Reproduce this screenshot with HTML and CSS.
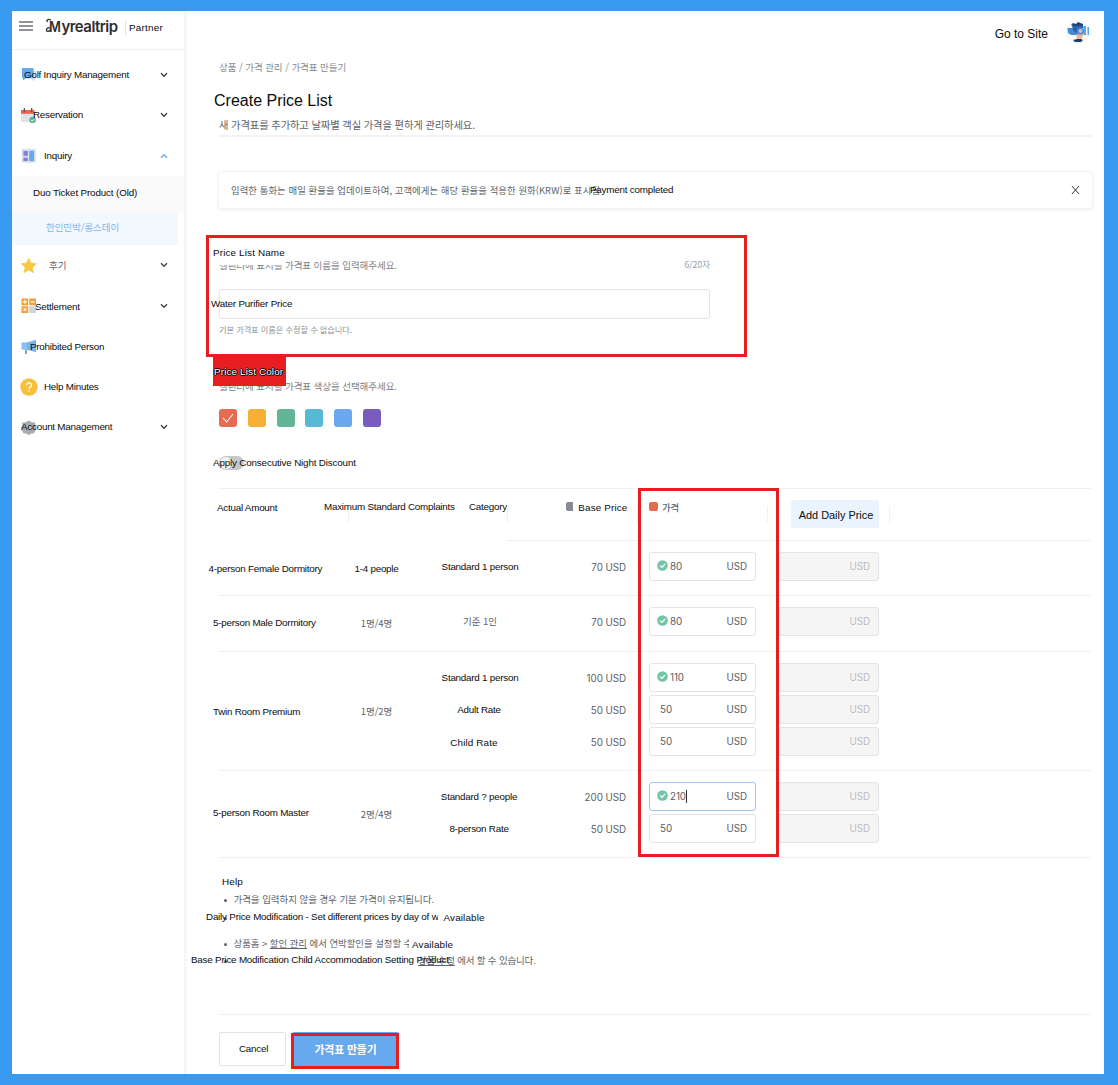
FILE: index.html
```html
<!DOCTYPE html>
<html lang="ko">
<head>
<meta charset="utf-8">
<title>Create Price List</title>
<link rel="stylesheet" href="styles.css">
</head>
<body>
<svg width="0" height="0" class="defs">
  <symbol id="down" viewBox="0 0 8 6"><path d="M1 1.2 4 4.2 7 1.2" fill="none" stroke="currentColor" stroke-width="1.5"/></symbol>
  <symbol id="ok" viewBox="0 0 11 11"><circle cx="5.5" cy="5.5" r="5.3" fill="#74c4a7"/><path d="M3 5.6 4.9 7.4 8.2 3.9" fill="none" stroke="#fff" stroke-width="1.3"/></symbol>
</svg>
<div class="app">
  <aside class="side">
    <header class="brand">
      <svg class="burger" viewBox="0 0 14 10"><path d="M0 1h14M0 5h14M0 9h14" stroke="#6b7078" stroke-width="1.6"/></svg>
      <span class="logo"><svg class="swash" viewBox="0 0 8 16"><path d="M6 2C3 .5 1 2 2.500 4M5 10c-2-1-4 1-3.500 2.500s3.500 1 4-1" fill="none" stroke="#2d2d30" stroke-width="1.300"/></svg><i>M</i>yrealtrip</span>
      <span class="partner wide">Partner</span>
    </header>
    <nav class="nav">
      <a class="item"><svg class="ic" viewBox="0 0 16 16"><path d="M4 4h11v8h-1v3l-4-3H4z" fill="#c5e0fb"/><path d="M1 1h12v10H6l-4 3v-3H1z" fill="#64a8ef"/></svg><span class="m3">Golf Inquiry Management</span><svg class="chev"><use href="#down"/></svg></a>
      <a class="item"><svg class="ic" viewBox="0 0 16 16"><path d="M0 5h14v9.500H0z" fill="#dfe3e7"/><path d="M0 2h14v4H0z" fill="#e8644e"/><path d="M3.500 0v4M11 0v4" stroke="#555b66" stroke-width="1.4"/><circle cx="12" cy="12.5" r="3.4" fill="#5fb491"/><path d="m10.5 12.5 1.2 1.1 2-2.1" fill="none" stroke="#fff"/></svg><span class="m12">Reservation</span><svg class="chev"><use href="#down"/></svg></a>
      <a class="item"><svg class="ic" viewBox="0 0 16 16"><path d="M.8.8h14.400v14.400H.8z" fill="#dadfe6"/><path d="M2.500 3h4.500v5H2.500zM2.500 10h4.500v3.500H2.500z" fill="#8579e6"/><path d="M8.500 3h5v10.500h-5z" fill="#66a9ef"/></svg><span class="m23">Inquiry</span><svg class="chev up"><use href="#down"/></svg></a>
      <a class="sub">Duo Ticket Product (Old)</a>
      <a class="sub on kr">한인민박/롱스테이</a>
      <a class="item"><svg class="ic" viewBox="0 0 16 16"><path d="m8 .3 2.300 5 5.500.6-4.100 3.700 1.200 5.500L8 12.300l-4.900 2.800 1.200-5.500L.2 5.900l5.500-.6z" fill="#f6c844" stroke="#f6c844" stroke-width=".8" stroke-linejoin="round"/></svg><span class="kr m28">후기</span><svg class="chev"><use href="#down"/></svg></a>
      <a class="item"><svg class="ic" viewBox="0 0 16 16"><path d="M.5.5h7v7h-7zM8.500.5h7v7h-7zM.5 8.500h7v7h-7z" fill="#f0a23c"/><path d="M8.500 8.500h7v7h-7z" fill="#cdd3d9"/><path d="M2 4h4M4 2v4M10 4h4M2.700 10.700l2.600 2.600m0-2.600-2.600 2.600" stroke="#fff" stroke-width="1.200"/></svg><span class="m14 low">Settlement</span><svg class="chev"><use href="#down"/></svg></a>
      <a class="item"><svg class="ic" viewBox="0 0 16 16"><path d="M4 9h2.200v6.500H4z" fill="#9aa2ab"/><path d="M.5 3.500h6V11h-6z" fill="#8cc0f5"/><path d="m6 3.500 9.500-2.700v13L6 11z" fill="#76b3f2"/></svg><span class="m9 low">Prohibited Person</span></a>
      <a class="item"><svg class="ic big" viewBox="0 0 18 18"><circle cx="9" cy="9" r="8.700" fill="#f5c13c"/><path d="M6.600 7.200c0-3.200 4.900-3.200 4.900 0 0 1.800-2.400 1.800-2.400 3.800M9.100 12.300v1.500" fill="none" stroke="#fff" stroke-width="1.300"/></svg><span class="m23">Help Minutes</span></a>
      <a class="item"><svg class="ic" viewBox="0 0 16 16"><path d="m8 .5 3 1.700 3.500.3.300 3.500L16 8l-1.200 3-1.300 2.700-3 .3L8 15.700 5.500 14l-3-.3L1.200 11 0 8l1.200-2 .3-3.500L5 2.200z" fill="#a3abb3"/><circle cx="8" cy="8" r="2.500" fill="#b9c0c7"/></svg><span class="m0">Account Management</span><svg class="chev"><use href="#down"/></svg></a>
    </nav>
  </aside>
  <main class="main">
    <header class="top">
      <span>Go to Site</span>
      <svg class="avatar" viewBox="0 0 24 24"><circle cx="12" cy="12" r="11.300" fill="#fbfcfe" stroke="#e8ebee" stroke-width=".7"/><path d="M7 6 5 5l2-2 3 1 2-2 5 2v4H7z" fill="#1d4775"/><path d="M9 9h9v6l-3 4h-4z" fill="#efb59c"/><path d="M1.500 8h7l3-1 1 7-3 1H5l-3-2z" fill="#428bdc"/><path d="M6 6h11l1 2-6 1-2 4-3-3z" fill="#2a64a8"/><circle cx="14.500" cy="11" r="2.700" fill="#efb59c" stroke="#428bdc" stroke-width="1.600"/><path d="M18 6h2v9h-2zM21.500 7h1.500v8h-1.500z" fill="#55a2ed"/><path d="m7 20 4-1h4l2 1-2 2H9z" fill="#173f70"/></svg>
    </header>
    <div class="crumb kr">상품 / 가격 관리 / 가격표 만들기</div>
    <h1>Create Price List</h1>
    <p class="lead kr">새 가격표를 추가하고 날짜별 객실 가격을 편하게 관리하세요.</p>
    <div class="notice"><span class="kr">입력한 통화는 매일 환율을 업데이트하여, 고객에게는 해당 환율을 적용한 원화(KRW)로 표시됨</span><span class="paid">Payment completed</span><svg class="x" viewBox="0 0 10 10"><path d="m1 .5 8 9M9 .5 1 9.500" stroke="#333" stroke-width="1.100"/></svg></div>
    <section class="field">
      <h2 class="wide name-title">Price List Name</h2>
      <div class="desc kr"><span>캘린더에 표시될 가격표 이름을 입력해주세요.</span><small>6/20자</small></div>
      <div class="text-input"><span>Water Purifier Price</span></div>
      <p class="hint kr">기본 가격표 이름은 수정할 수 없습니다.</p>
    </section>
    <section class="field">
      <h2 class="wide color-title">Price List Color</h2>
      <div class="desc kr"><span>캘린더에 표시될 가격표 색상을 선택해주세요.</span></div>
      <div class="swatches"><b class="red"><svg viewBox="0 0 18 18"><path d="m4 9 3.700 4L14 5" fill="none" stroke="#fff" stroke-width="1.100"/></svg></b><b class="yellow"></b><b class="green"></b><b class="cyan"></b><b class="blue"></b><b class="purple"></b></div>
    </section>
    <div class="discount"><i class="toggle"></i><span>Apply Consecutive Night Discount</span></div>
    <section class="table">
      <div class="row head">
        <div class="c-name"><span>Actual Amount</span></div>
        <div class="c-occ div"><span>Maximum Standard Complaints</span></div>
        <div class="c-cat div"><span>Category</span></div>
        <div class="c-base div"><i></i><span class="wide">Base Price</span></div>
        <div class="c-price div"><i></i><span class="kr">가격</span></div>
        <div class="c-add div"><button>Add Daily Price</button></div>
        <div class="div"></div>
      </div>
      <div class="row r1">
        <div class="c-name far"><span>4-person Female Dormitory</span></div>
        <div class="c-occ down1"><span>1-4 people</span></div>
        <div class="c-cat"><p>Standard 1 person</p></div>
        <div class="c-base"><p>70 USD</p></div>
        <div class="c-price"><p><svg><use href="#ok"/></svg><span>80</span><em>USD</em></p></div>
        <div class="c-add"><p>USD</p></div>
      </div>
      <div class="row r2">
        <div class="c-name up1"><span>5-person Male Dormitory</span></div>
        <div class="c-occ kr"><span>1명/4명</span></div>
        <div class="c-cat kr"><p>기준 1인</p></div>
        <div class="c-base"><p>70 USD</p></div>
        <div class="c-price"><p><svg><use href="#ok"/></svg><span>80</span><em>USD</em></p></div>
        <div class="c-add"><p>USD</p></div>
      </div>
      <div class="row r3">
        <div class="c-name down1"><span>Twin Room Premium</span></div>
        <div class="c-occ kr"><span>1명/2명</span></div>
        <div class="c-cat"><p>Standard 1 person</p><p class="left">Adult Rate</p><p class="shift wide">Child Rate</p></div>
        <div class="c-base"><p>100 USD</p><p>50 USD</p><p>50 USD</p></div>
        <div class="c-price"><p><svg><use href="#ok"/></svg><span>110</span><em>USD</em></p><p><span>50</span><em>USD</em></p><p><span>50</span><em>USD</em></p></div>
        <div class="c-add"><p>USD</p><p>USD</p><p>USD</p></div>
      </div>
      <div class="row r4">
        <div class="c-name up1"><span>5-person Room Master</span></div>
        <div class="c-occ kr"><span>2명/4명</span></div>
        <div class="c-cat"><p class="left">Standard ? people</p><p class="left">8-person Rate</p></div>
        <div class="c-base"><p>200 USD</p><p>50 USD</p></div>
        <div class="c-price"><p class="focus"><svg><use href="#ok"/></svg><span class="caret">210</span><em>USD</em></p><p><span>50</span><em>USD</em></p></div>
        <div class="c-add"><p>USD</p><p>USD</p></div>
      </div>
    </section>
    <section class="help">
      <h3 class="wide">Help</h3>
      <div class="line kr"><i></i><span>가격을 입력하지 않을 경우 기본 가격이 유지됩니다.</span></div>
      <div class="line daily"><i></i><span class="over clip">Daily Price Modification - Set different prices by day of w</span><span class="avail wide">Available</span></div>
      <div class="line kr third"><i></i><span class="cut">상품홈 &gt; <u>할인 관리</u> 에서 연박할인을 설정할 수</span><span class="avail wide">Available</span></div>
      <div class="line kr fourth"><i></i><span class="over base-mod">Base Price Modification Child Accommodation Setting Product</span><span class="tail"><u>상품 수정</u> 에서 할 수 있습니다.</span></div>
    </section>
    <footer class="actions"><button class="cancel">Cancel</button><button class="create kr">가격표 만들기</button></footer>
    <div class="mark mark-name"></div>
    <div class="mark mark-price"></div>
    <div class="mark mark-create"></div>
  </main>
</div>
</body>
</html>
```

FILE: styles.css
```css
* { box-sizing: border-box; }
body, h1, h2, h3, p { margin: 0; font-weight: 400; }
body { background: #389bf1; padding: 11px 14px 11px 12px; height: 1085px; overflow: hidden; font: 9.8px/14px "Liberation Sans", "Noto Sans CJK KR", sans-serif; letter-spacing: -.22px; color: #0c0c0c; }
i, em { font-style: normal; }
button { font: inherit; letter-spacing: inherit; color: inherit; border: 0; padding: 0; }
.defs { position: absolute; }
.kr { font-family: "Noto Sans CJK KR", sans-serif; font-size: 9.5px; letter-spacing: -.06px; color: #5c6268; }
.wide { font-size: 9.9px; letter-spacing: .14px; color: #0c0c0c; font-family: "Liberation Sans", sans-serif; }
.app { display: flex; height: 1063px; background: #fff; white-space: nowrap; }

.side { width: 173px; flex: none; border-right: 1px solid #f4f4f5; box-shadow: 1px 0 3px rgba(0,0,0,.05); }
.brand { height: 39px; display: flex; align-items: center; padding: 0 0 7px 7px; border-bottom: 1px solid #f0f0f1; }
.burger { width: 14px; height: 10px; margin-top: -1px; }
.logo { display: flex; margin-left: 12px; width: 74px; font: 600 15px/20px Inter, sans-serif; letter-spacing: -.55px; color: #2d2d30; }
.swash { width: 8px; height: 16px; margin: 1px -4px 0 0; flex: none; }
.logo i { display: block; width: 12.5px; font-weight: 600; transform: scaleX(.86); transform-origin: left; letter-spacing: 0; }
.partner { margin: 2px 0 0 6px; padding-left: 3px; border-left: 1px solid #e3e3e4; letter-spacing: .24px; }
.nav { padding-top: 4.5px; display: flex; flex-direction: column; }
.item { height: 40.5px; display: flex; align-items: center; padding: 0 16px 0 9px; }
.item span { position: relative; margin-right: auto; }
.item .low { margin-top: 2px; }
.ic { width: 15.5px; height: 15.5px; margin-right: -15.5px; flex: none; }
.ic.big { width: 18px; height: 18px; margin: 0 -17px 0 -1px; }
.m0 { margin-left: 0; } .m3 { margin-left: 3px; } .m9 { margin-left: 9px; } .m12 { margin-left: 12px; }
.m14 { margin-left: 14px; } .m23 { margin-left: 23px; } .m28 { margin-left: 28px; }
.chev { width: 8px; height: 6px; color: #43474d; flex: none; }
.chev.up { color: #71acec; transform: rotate(180deg); }
.sub { height: 34.5px; padding: 9.5px 0 0 21px; background: #fafafa; letter-spacing: -.13px; }
.sub.on { background: #f1f9ff; margin-right: 6px; padding-left: 34px; color: #82b4ed; letter-spacing: -.06px; }

.main { position: relative; flex: 1; padding-left: 34px; }
.top { height: 44px; display: flex; justify-content: flex-end; align-items: center; padding-right: 14px; gap: 18px; font-size: 12px; letter-spacing: 0; padding-top: 1px; }
.avatar { width: 24px; height: 24px; margin-top: -3px; }
.crumb { height: 24px; line-height: 24px; font-size: 9.5px; color: #878c91; }
h1 { font-size: 16px; letter-spacing: 0; line-height: 22px; margin: 11px 0 0 -5px; }
.lead { font-size: 10.3px; letter-spacing: -.12px; line-height: 20px; margin-top: 3px; width: 873px; border-bottom: 2px solid #f3f3f4; height: 22px; }
.notice { margin-top: 34px; width: 875px; height: 38px; margin-left: -1px; border: 1px solid #f3f3f4; border-radius: 3px; box-shadow: 0 1px 3px rgba(0,0,0,.08); display: flex; align-items: center; padding: 0 12px 0 12px; }
.notice .kr { font-size: 9.4px; letter-spacing: .06px; width: 359px; }
.notice .paid { position: relative; letter-spacing: -.2px; }
.notice .x { width: 9px; height: 10px; margin-left: auto; }

.name-title { position: relative; width: 73px; height: 21px; margin: 35px 0 0 -6px; line-height: 17px; background: #fff; }
.desc { display: flex; justify-content: space-between; width: 491px; height: 16px; margin-top: -7px; line-height: 14px; color: #7c8187; }
.desc small { font-size: 8.7px; color: #999da1; }
.text-input { margin-top: 15px; width: 491px; height: 30px; border: 1px solid #e4e4e6; border-radius: 3px; line-height: 28px; }
.text-input span { margin-left: -9px; letter-spacing: -.17px; }
.hint { font-size: 8.2px; line-height: 16px; margin-top: 2px; color: #8b9095; }
.color-title { position: relative; width: 73px; height: 30px; margin: 19px 0 0 -6px; background: #e61e20; color: #fff; line-height: 31px; padding-left: 1px; text-shadow: 1px 0 #000, -1px 0 #000, 0 1px #000, 0 -1px #000; }
.swatches { display: flex; gap: 10.8px; margin-top: 14px; }
.swatches b { width: 18px; height: 18px; border-radius: 3px; }
.swatches svg { display: block; }
.red { background: #e86a50; } .yellow { background: #f5b035; } .green { background: #62b595; }
.cyan { background: #58b9d3; } .blue { background: #6aa9ee; } .purple { background: #795cbd; }
.discount { display: flex; height: 14px; margin-top: 29px; line-height: 14px; }
.toggle { width: 25px; height: 14px; border-radius: 7px; background: #c6c7c8; margin-right: -31px; padding: 1px; }
.toggle::before { content: ""; display: block; width: 12px; height: 12px; border-radius: 50%; background: #f2f2f2; }
.discount span { position: relative; letter-spacing: -.15px; }

.table { width: 873px; margin-top: 18px; border-top: 1px solid #f1f1f2; }
.row { display: grid; grid-template-columns: 130px 87px 72px 130px 130px 122px 1fr; border-bottom: 1px solid #f1f1f2; }
.row p { height: 29px; line-height: 29px; }
.row > div { display: flex; flex-direction: column; gap: 3px; padding-top: 11px; }
.row > .c-name, .row > .c-occ { justify-content: center; padding-top: 0; }
.c-name span { margin-left: -6px; }
.c-name.far span { margin-left: -10.5px; }
.row > .c-name.up1 { padding-bottom: 2px; }
.row > .down1, .row > .c-name.far { padding-top: 1px; }
.c-occ, .c-cat { align-items: center; }
.row:not(.head) > .c-occ { padding-right: 32px; }
.row:not(.head) > .c-occ.kr { padding-bottom: 1px; }
.row:not(.head) > .c-cat { padding-left: 16px; }
.c-cat .shift { margin: 1px 12px 0 0; }
.c-cat .left { margin-right: 2px; }
.c-base, .c-price, .c-add { font-family: Inter, sans-serif; font-size: 9.8px; letter-spacing: -.05px; color: #5c6066; }
.c-base { text-align: right; padding-right: 12px; }
.c-base p { padding-top: 1px; }
.r1 { height: 55px; } .r2 { height: 56px; } .r3 { height: 119px; } .r4 { height: 87px; }
.c-price p { width: 107px; border: 1px solid #e4e4e6; border-radius: 3px; display: flex; line-height: 27px; padding: 0 8px 0 10px; }
.c-price svg { width: 11px; height: 11px; margin: 7px 2px 0 -3px; }
.c-price em { margin-left: auto; }
.c-price .focus { border-color: #9fc6f4; }
.c-price .caret { height: 13px; line-height: 13px; margin-top: 7px; border-right: 1px solid #333; }
.c-add p { width: 101px; border: 1px solid #e4e4e6; border-radius: 3px; background: #f5f5f5; color: #b9bcc0; text-align: right; padding-right: 8px; line-height: 27px; }
.row > .c-price { padding-left: 11px; }
.row > .c-add { padding-left: 10px; }
.row.head { height: 52px; border: 0; background: linear-gradient(#f1f1f2, #f1f1f2) 288px bottom / 585px 1px no-repeat; }
.row.head > div { display: block; padding-top: 11px; }
.row.head > .div { margin-left: -1px; }
.row.head span { display: inline-block; }
.head .div { background: linear-gradient(#f1f1f2, #f1f1f2) left 17px / 1px 17px no-repeat; }
.row.head .c-name span { margin: 1px 0 0 -2px; }
.row.head .c-occ span { margin-left: -24px; }
.row.head .c-cat { padding-left: 33px; margin-left: 0; background-position: -1px 17px; }
.head .c-base i, .head .c-price i { display: inline-block; width: 7px; height: 9px; border-radius: 2px 0 0 2px; background: #868b93; margin-right: 5px; }
.head .c-base span { margin-top: 1px; }
.row.head .c-base { padding-right: 10.5px; }
.head .c-price i { background: #e86a50; width: 9px; margin: 0 4px 0 1px; border-radius: 2px; }
.head .c-price span { font-weight: 500; font-size: 9.4px; }
.head .c-add button { width: 88px; height: 28px; margin: 0 0 0 14px; background: #eaf4fe; border-radius: 2px; color: #0c0c0c; font: 10.9px "Liberation Sans", sans-serif; letter-spacing: 0; padding: 2px 0 0 2px; }

.help { height: 157px; width: 873px; border-bottom: 1px solid #f1f1f2; padding-top: 17px; }
.help h3 { line-height: 14px; margin-left: 3px; }
.line { display: flex; height: 17.5px; line-height: 20px; position: relative; }
.line > i { width: 3px; height: 3px; border-radius: 50%; background: #5c6268; margin: 10px 7px 0 4.5px; flex: none; }
.line .over { margin-left: -27.5px; color: #0c0c0c; font: 9.8px/20px "Liberation Sans", sans-serif; letter-spacing: -.2px; position: relative; }
.clip { width: 232px; overflow: hidden; }
.avail { margin: 1.5px 0 0 5.5px; }
.third { margin-top: 9px; }
.cut { width: 175.5px; overflow: hidden; font-size: 9.4px; letter-spacing: 0; }
.third .avail { margin-left: 3px; }
.line .base-mod { margin-left: -42.5px; width: 227px; }
.fourth { height: 20px; margin-top: -1px; }
.tail { letter-spacing: -.18px; }

.actions { display: flex; gap: 6px; padding-top: 17px; }
.cancel { width: 67px; height: 34px; background: #fff; border: 1px solid #e2e2e8; border-radius: 2px; padding-left: 2px; }
.create { width: 107px; height: 34px; background: #67a9ee; color: #fff; font-weight: 700; font-size: 10.8px; border-radius: 2px; }
.mark { position: absolute; border: 3px solid #e61e20; z-index: 2; }
.mark-name { left: 21px; top: 224px; width: 541px; height: 122px; }
.mark-price { left: 453px; top: 477px; width: 141px; height: 369px; }
.mark-create { left: 106px; top: 1022px; width: 108px; height: 36px; }
```
